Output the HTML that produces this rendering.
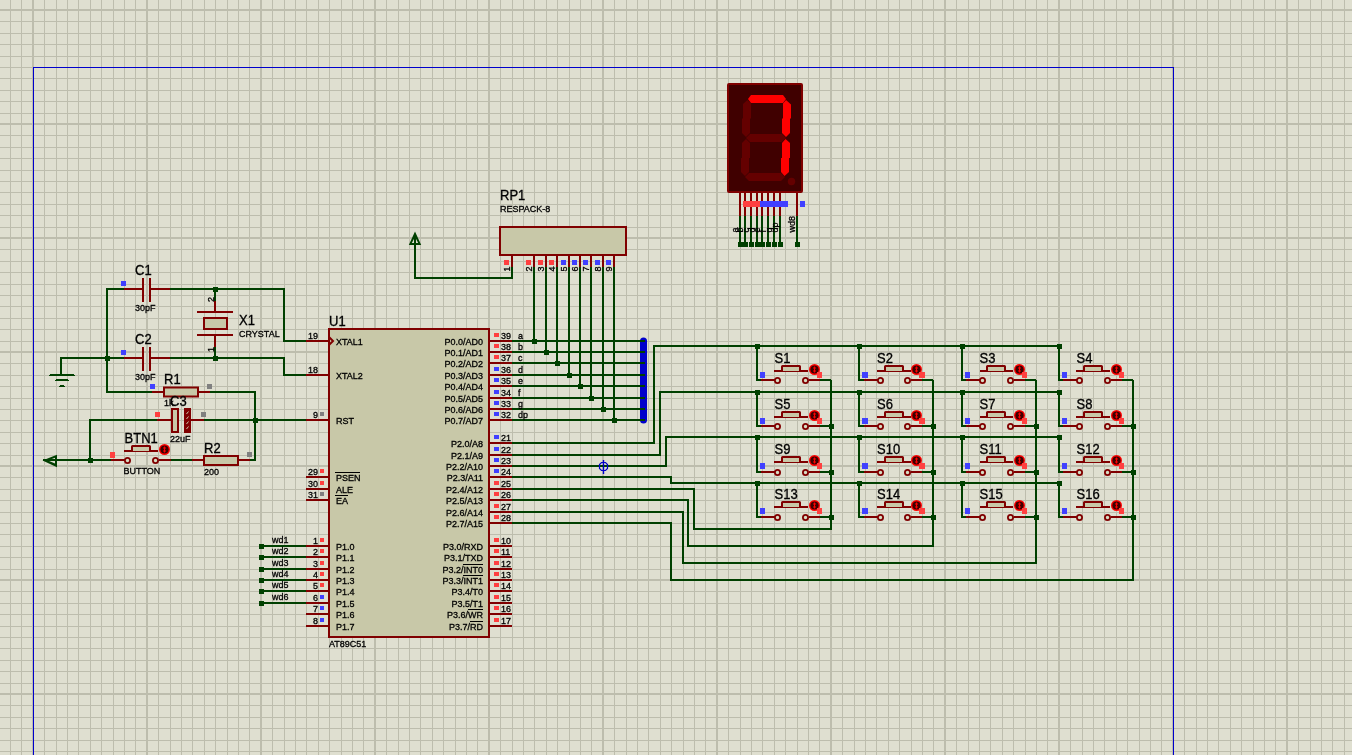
<!DOCTYPE html>
<html><head><meta charset="utf-8"><style>
html,body{margin:0;padding:0;overflow:hidden;background:#dfdfd0;}
svg{display:block;} .ov{position:absolute;left:0;top:0;will-change:transform;}
text{font-family:"Liberation Sans",sans-serif;}
</style></head><body>
<svg width="1352" height="755" viewBox="0 0 1352 755">
<rect width="1352" height="755" fill="#dfdfd0"/>
<g shape-rendering="crispEdges"><g fill="#bdbdad"><rect x="-1" y="0" width="1" height="755"/><rect x="10" y="0" width="1" height="755"/><rect x="21" y="0" width="1" height="755"/><rect x="32" y="0" width="2" height="755"/><rect x="44" y="0" width="1" height="755"/><rect x="56" y="0" width="1" height="755"/><rect x="67" y="0" width="1" height="755"/><rect x="78" y="0" width="1" height="755"/><rect x="90" y="0" width="1" height="755"/><rect x="101" y="0" width="1" height="755"/><rect x="113" y="0" width="1" height="755"/><rect x="124" y="0" width="1" height="755"/><rect x="135" y="0" width="1" height="755"/><rect x="146" y="0" width="2" height="755"/><rect x="158" y="0" width="1" height="755"/><rect x="170" y="0" width="1" height="755"/><rect x="181" y="0" width="1" height="755"/><rect x="192" y="0" width="1" height="755"/><rect x="204" y="0" width="1" height="755"/><rect x="215" y="0" width="1" height="755"/><rect x="227" y="0" width="1" height="755"/><rect x="238" y="0" width="1" height="755"/><rect x="249" y="0" width="1" height="755"/><rect x="260" y="0" width="2" height="755"/><rect x="272" y="0" width="1" height="755"/><rect x="284" y="0" width="1" height="755"/><rect x="295" y="0" width="1" height="755"/><rect x="306" y="0" width="1" height="755"/><rect x="318" y="0" width="1" height="755"/><rect x="329" y="0" width="1" height="755"/><rect x="341" y="0" width="1" height="755"/><rect x="352" y="0" width="1" height="755"/><rect x="363" y="0" width="1" height="755"/><rect x="374" y="0" width="2" height="755"/><rect x="386" y="0" width="1" height="755"/><rect x="398" y="0" width="1" height="755"/><rect x="409" y="0" width="1" height="755"/><rect x="420" y="0" width="1" height="755"/><rect x="432" y="0" width="1" height="755"/><rect x="443" y="0" width="1" height="755"/><rect x="455" y="0" width="1" height="755"/><rect x="466" y="0" width="1" height="755"/><rect x="477" y="0" width="1" height="755"/><rect x="488" y="0" width="2" height="755"/><rect x="500" y="0" width="1" height="755"/><rect x="512" y="0" width="1" height="755"/><rect x="523" y="0" width="1" height="755"/><rect x="534" y="0" width="1" height="755"/><rect x="546" y="0" width="1" height="755"/><rect x="557" y="0" width="1" height="755"/><rect x="569" y="0" width="1" height="755"/><rect x="580" y="0" width="1" height="755"/><rect x="591" y="0" width="1" height="755"/><rect x="602" y="0" width="2" height="755"/><rect x="614" y="0" width="1" height="755"/><rect x="626" y="0" width="1" height="755"/><rect x="637" y="0" width="1" height="755"/><rect x="648" y="0" width="1" height="755"/><rect x="660" y="0" width="1" height="755"/><rect x="671" y="0" width="1" height="755"/><rect x="683" y="0" width="1" height="755"/><rect x="694" y="0" width="1" height="755"/><rect x="705" y="0" width="1" height="755"/><rect x="716" y="0" width="2" height="755"/><rect x="728" y="0" width="1" height="755"/><rect x="740" y="0" width="1" height="755"/><rect x="751" y="0" width="1" height="755"/><rect x="762" y="0" width="1" height="755"/><rect x="774" y="0" width="1" height="755"/><rect x="785" y="0" width="1" height="755"/><rect x="797" y="0" width="1" height="755"/><rect x="808" y="0" width="1" height="755"/><rect x="819" y="0" width="1" height="755"/><rect x="830" y="0" width="2" height="755"/><rect x="842" y="0" width="1" height="755"/><rect x="854" y="0" width="1" height="755"/><rect x="865" y="0" width="1" height="755"/><rect x="876" y="0" width="1" height="755"/><rect x="888" y="0" width="1" height="755"/><rect x="899" y="0" width="1" height="755"/><rect x="911" y="0" width="1" height="755"/><rect x="922" y="0" width="1" height="755"/><rect x="933" y="0" width="1" height="755"/><rect x="944" y="0" width="2" height="755"/><rect x="956" y="0" width="1" height="755"/><rect x="968" y="0" width="1" height="755"/><rect x="979" y="0" width="1" height="755"/><rect x="990" y="0" width="1" height="755"/><rect x="1002" y="0" width="1" height="755"/><rect x="1013" y="0" width="1" height="755"/><rect x="1025" y="0" width="1" height="755"/><rect x="1036" y="0" width="1" height="755"/><rect x="1047" y="0" width="1" height="755"/><rect x="1058" y="0" width="2" height="755"/><rect x="1070" y="0" width="1" height="755"/><rect x="1082" y="0" width="1" height="755"/><rect x="1093" y="0" width="1" height="755"/><rect x="1104" y="0" width="1" height="755"/><rect x="1116" y="0" width="1" height="755"/><rect x="1127" y="0" width="1" height="755"/><rect x="1139" y="0" width="1" height="755"/><rect x="1150" y="0" width="1" height="755"/><rect x="1161" y="0" width="1" height="755"/><rect x="1172" y="0" width="2" height="755"/><rect x="1184" y="0" width="1" height="755"/><rect x="1196" y="0" width="1" height="755"/><rect x="1207" y="0" width="1" height="755"/><rect x="1218" y="0" width="1" height="755"/><rect x="1230" y="0" width="1" height="755"/><rect x="1241" y="0" width="1" height="755"/><rect x="1253" y="0" width="1" height="755"/><rect x="1264" y="0" width="1" height="755"/><rect x="1275" y="0" width="1" height="755"/><rect x="1286" y="0" width="2" height="755"/><rect x="1298" y="0" width="1" height="755"/><rect x="1310" y="0" width="1" height="755"/><rect x="1321" y="0" width="1" height="755"/><rect x="1332" y="0" width="1" height="755"/><rect x="1344" y="0" width="1" height="755"/><rect x="0" y="-1" width="1352" height="1"/><rect x="0" y="9" width="1352" height="2"/><rect x="0" y="21" width="1352" height="1"/><rect x="0" y="33" width="1352" height="1"/><rect x="0" y="44" width="1352" height="1"/><rect x="0" y="56" width="1352" height="1"/><rect x="0" y="67" width="1352" height="1"/><rect x="0" y="78" width="1352" height="1"/><rect x="0" y="90" width="1352" height="1"/><rect x="0" y="101" width="1352" height="1"/><rect x="0" y="113" width="1352" height="1"/><rect x="0" y="123" width="1352" height="2"/><rect x="0" y="135" width="1352" height="1"/><rect x="0" y="147" width="1352" height="1"/><rect x="0" y="158" width="1352" height="1"/><rect x="0" y="170" width="1352" height="1"/><rect x="0" y="181" width="1352" height="1"/><rect x="0" y="192" width="1352" height="1"/><rect x="0" y="204" width="1352" height="1"/><rect x="0" y="215" width="1352" height="1"/><rect x="0" y="227" width="1352" height="1"/><rect x="0" y="237" width="1352" height="2"/><rect x="0" y="249" width="1352" height="1"/><rect x="0" y="261" width="1352" height="1"/><rect x="0" y="272" width="1352" height="1"/><rect x="0" y="284" width="1352" height="1"/><rect x="0" y="295" width="1352" height="1"/><rect x="0" y="306" width="1352" height="1"/><rect x="0" y="318" width="1352" height="1"/><rect x="0" y="329" width="1352" height="1"/><rect x="0" y="341" width="1352" height="1"/><rect x="0" y="351" width="1352" height="2"/><rect x="0" y="363" width="1352" height="1"/><rect x="0" y="375" width="1352" height="1"/><rect x="0" y="386" width="1352" height="1"/><rect x="0" y="398" width="1352" height="1"/><rect x="0" y="409" width="1352" height="1"/><rect x="0" y="420" width="1352" height="1"/><rect x="0" y="432" width="1352" height="1"/><rect x="0" y="443" width="1352" height="1"/><rect x="0" y="455" width="1352" height="1"/><rect x="0" y="465" width="1352" height="2"/><rect x="0" y="477" width="1352" height="1"/><rect x="0" y="489" width="1352" height="1"/><rect x="0" y="500" width="1352" height="1"/><rect x="0" y="512" width="1352" height="1"/><rect x="0" y="523" width="1352" height="1"/><rect x="0" y="534" width="1352" height="1"/><rect x="0" y="546" width="1352" height="1"/><rect x="0" y="557" width="1352" height="1"/><rect x="0" y="569" width="1352" height="1"/><rect x="0" y="579" width="1352" height="2"/><rect x="0" y="591" width="1352" height="1"/><rect x="0" y="603" width="1352" height="1"/><rect x="0" y="614" width="1352" height="1"/><rect x="0" y="626" width="1352" height="1"/><rect x="0" y="637" width="1352" height="1"/><rect x="0" y="648" width="1352" height="1"/><rect x="0" y="660" width="1352" height="1"/><rect x="0" y="671" width="1352" height="1"/><rect x="0" y="683" width="1352" height="1"/><rect x="0" y="693" width="1352" height="2"/><rect x="0" y="705" width="1352" height="1"/><rect x="0" y="717" width="1352" height="1"/><rect x="0" y="728" width="1352" height="1"/><rect x="0" y="740" width="1352" height="1"/><rect x="0" y="751" width="1352" height="1"/></g><path d="M33.5,760 V67.5 H1173.5 V760" fill="none" stroke="#0000cc" stroke-width="1"/></g>
<path d="M643.5,341 V420" stroke="#0000cc" stroke-width="7" stroke-linecap="round"/><g shape-rendering="crispEdges"><g fill="none" stroke="#004000" stroke-width="2"><path d="M124,289 H107 V392 H152"/><path d="M170,289 H284 V341 H306"/><path d="M61,375 V358 H124"/><path d="M170,358 H284 V375 H306"/><path d="M215,289 V301"/><path d="M215,347 V358"/><path d="M210,392 H255 V460 H250"/><path d="M306,420 H204"/><path d="M157,420 H90 V460"/><path d="M56,460 H112"/><path d="M170,460 H192"/><path d="M43,460 H56"/><path d="M757,346 V380 H761"/><path d="M820,380 H831"/><path d="M859,346 V380 H864"/><path d="M922,380 H933"/><path d="M962,346 V380 H966"/><path d="M1025,380 H1036"/><path d="M1059,346 V380 H1063"/><path d="M1122,380 H1133"/><path d="M757,392 V426 H761"/><path d="M820,426 H831"/><path d="M859,392 V426 H864"/><path d="M922,426 H933"/><path d="M962,392 V426 H966"/><path d="M1025,426 H1036"/><path d="M1059,392 V426 H1063"/><path d="M1122,426 H1133"/><path d="M757,437 V472 H761"/><path d="M820,472 H831"/><path d="M859,437 V472 H864"/><path d="M922,472 H933"/><path d="M962,437 V472 H966"/><path d="M1025,472 H1036"/><path d="M1059,437 V472 H1063"/><path d="M1122,472 H1133"/><path d="M757,483 V517 H761"/><path d="M820,517 H831"/><path d="M859,483 V517 H864"/><path d="M922,517 H933"/><path d="M962,483 V517 H966"/><path d="M1025,517 H1036"/><path d="M1059,483 V517 H1063"/><path d="M1122,517 H1133"/><path d="M512,443 H654 V346 H1059"/><path d="M512,455 H660 V392 H1059"/><path d="M512,466 H666 V437 H1059"/><path d="M512,477 H671 V483 H1059"/><path d="M831,380 V529 H694 V489 H512"/><path d="M933,380 V546 H688 V500 H512"/><path d="M1036,380 V563 H683 V512 H512"/><path d="M1133,380 V580 H671 V523 H512"/><path d="M261,546 H306"/><path d="M261,557 H306"/><path d="M261,569 H306"/><path d="M261,580 H306"/><path d="M261,591 H306"/><path d="M261,603 H306"/><path d="M512,267 V278 H415 V244"/><path d="M415,234 V244"/><path d="M534,267 V341"/><path d="M512,341 H645"/><path d="M546,267 V352"/><path d="M512,352 H645"/><path d="M557,267 V363"/><path d="M512,363 H645"/><path d="M569,267 V375"/><path d="M512,375 H645"/><path d="M580,267 V386"/><path d="M512,386 H645"/><path d="M591,267 V398"/><path d="M512,398 H645"/><path d="M603,267 V409"/><path d="M512,409 H645"/><path d="M614,267 V420"/><path d="M512,420 H645"/><path d="M740,216 V244"/><path d="M745,216 V244"/><path d="M751,216 V244"/><path d="M757,216 V244"/><path d="M762,216 V244"/><path d="M768,216 V244"/><path d="M774,216 V244"/><path d="M780,216 V244"/><path d="M797,216 V244"/></g><g fill="none" stroke="#800000" stroke-width="2"><path d="M215,301 V312"/><path d="M215,335 V347"/><path d="M124,289 H143.0 M151.0,289 H170"/><path d="M124,358 H143.0 M151.0,358 H170"/><path d="M152,392 H164 M198,392 H210"/><path d="M157,420 H172 M191,420 H204"/><path d="M192,460 H204 M238,460 H250"/><path d="M111,460 H124.5 M158.5,460 H171"/><path d="M761,380 H774.5 M808.5,380 H820"/><path d="M864,380 H877.5 M910.5,380 H922"/><path d="M966,380 H979.5 M1013.5,380 H1025"/><path d="M1063,380 H1076.5 M1110.5,380 H1122"/><path d="M761,426 H774.5 M808.5,426 H820"/><path d="M864,426 H877.5 M910.5,426 H922"/><path d="M966,426 H979.5 M1013.5,426 H1025"/><path d="M1063,426 H1076.5 M1110.5,426 H1122"/><path d="M761,472 H774.5 M808.5,472 H820"/><path d="M864,472 H877.5 M910.5,472 H922"/><path d="M966,472 H979.5 M1013.5,472 H1025"/><path d="M1063,472 H1076.5 M1110.5,472 H1122"/><path d="M761,517 H774.5 M808.5,517 H820"/><path d="M864,517 H877.5 M910.5,517 H922"/><path d="M966,517 H979.5 M1013.5,517 H1025"/><path d="M1063,517 H1076.5 M1110.5,517 H1122"/><path d="M306,341 H329"/><path d="M306,375 H329"/><path d="M306,420 H329"/><path d="M306,477 H329"/><path d="M306,489 H329"/><path d="M306,500 H329"/><path d="M306,546 H329"/><path d="M306,557 H329"/><path d="M306,569 H329"/><path d="M306,580 H329"/><path d="M306,591 H329"/><path d="M306,603 H329"/><path d="M306,614 H329"/><path d="M306,626 H329"/><path d="M489,341 H512"/><path d="M489,352 H512"/><path d="M489,363 H512"/><path d="M489,375 H512"/><path d="M489,386 H512"/><path d="M489,398 H512"/><path d="M489,409 H512"/><path d="M489,420 H512"/><path d="M489,443 H512"/><path d="M489,455 H512"/><path d="M489,466 H512"/><path d="M489,477 H512"/><path d="M489,489 H512"/><path d="M489,500 H512"/><path d="M489,512 H512"/><path d="M489,523 H512"/><path d="M489,546 H512"/><path d="M489,557 H512"/><path d="M489,569 H512"/><path d="M489,580 H512"/><path d="M489,591 H512"/><path d="M489,603 H512"/><path d="M489,614 H512"/><path d="M489,626 H512"/><path d="M512,255 V267"/><path d="M534,255 V267"/><path d="M546,255 V267"/><path d="M557,255 V267"/><path d="M569,255 V267"/><path d="M580,255 V267"/><path d="M591,255 V267"/><path d="M603,255 V267"/><path d="M614,255 V267"/><path d="M740,192 V216"/><path d="M745,192 V216"/><path d="M751,192 V216"/><path d="M757,192 V216"/><path d="M762,192 V216"/><path d="M768,192 V216"/><path d="M774,192 V216"/><path d="M780,192 V216"/><path d="M797,192 V216"/></g></g>
<rect x="142.0" y="278" width="2" height="24" fill="#800000"/><rect x="149.0" y="278" width="2" height="24" fill="#800000"/><rect x="142.0" y="347" width="2" height="24" fill="#800000"/><rect x="149.0" y="347" width="2" height="24" fill="#800000"/><path d="M197,312 H233 M197,335 H233" stroke="#800000" stroke-width="2" fill="none"/><rect x="204" y="318" width="23" height="11" fill="#c8c8a8" stroke="#800000" stroke-width="2"/><g fill="#004000" shape-rendering="crispEdges"><rect x="50" y="374" width="24" height="1"/><rect x="49" y="375" width="26" height="1"/><rect x="56" y="379" width="12" height="1"/><rect x="55" y="380" width="14" height="1"/><rect x="60" y="385" width="4" height="1"/><rect x="59" y="386" width="6" height="1"/></g><rect x="164" y="387.5" width="34" height="9" fill="#c8c8a8" stroke="#800000" stroke-width="2"/><rect x="172" y="409" width="6" height="23" fill="#c8c8a8" stroke="#800000" stroke-width="2"/><rect x="185" y="409" width="5" height="23" fill="#800000" stroke="#800000" stroke-width="2"/><path d="M186.5,414 l2,-2.5 M186.5,419 l2,-2.5 M186.5,424 l2,-2.5 M186.5,429 l2,-2.5" stroke="#c8c8a8" stroke-width="1"/><rect x="204" y="456" width="34" height="9" fill="#c8c8a8" stroke="#800000" stroke-width="2"/><path d="M42.5,460.5 L57,454.8 V467.2 Z M48,460.5 L55,457.8 V463.6 Z" fill="#004000" fill-rule="evenodd"/><path d="M415,231.5 L408.8,245 H421.2 Z M415,237 L411.8,243 H418.2 Z" fill="#004000" fill-rule="evenodd"/><circle cx="127.5" cy="460.5" r="2.6" fill="#d8dcc4" stroke="#800000" stroke-width="1.8"/><circle cx="155.5" cy="460.5" r="2.6" fill="#d8dcc4" stroke="#800000" stroke-width="1.8"/><path d="M124,451 H158" stroke="#800000" stroke-width="2"/><path d="M132,451 V446.5 Q132,446 132.5,446 H149.5 Q150,446 150,446.5 V451" fill="#c8c8a8" stroke="#800000" stroke-width="2"/><circle cx="164.5" cy="449.5" r="5.5" fill="#ff0000"/><circle cx="164.5" cy="449.5" r="4.1" fill="#400000"/><path d="M164.5,446.5 V452.5 M163.0,448.0 H166.0 M163.0,451.0 H166.0" stroke="#ff0000" stroke-width="1"/><circle cx="777.5" cy="380.5" r="2.6" fill="#d8dcc4" stroke="#800000" stroke-width="1.8"/><circle cx="805.5" cy="380.5" r="2.6" fill="#d8dcc4" stroke="#800000" stroke-width="1.8"/><path d="M774,371 H808" stroke="#800000" stroke-width="2"/><path d="M782,371 V366.5 Q782,366 782.5,366 H799.5 Q800,366 800,366.5 V371" fill="#c8c8a8" stroke="#800000" stroke-width="2"/><circle cx="814.5" cy="369.5" r="5.5" fill="#ff0000"/><circle cx="814.5" cy="369.5" r="4.1" fill="#400000"/><path d="M814.5,366.5 V372.5 M813.0,368.0 H816.0 M813.0,371.0 H816.0" stroke="#ff0000" stroke-width="1"/><circle cx="880.5" cy="380.5" r="2.6" fill="#d8dcc4" stroke="#800000" stroke-width="1.8"/><circle cx="907.5" cy="380.5" r="2.6" fill="#d8dcc4" stroke="#800000" stroke-width="1.8"/><path d="M877,371 H911" stroke="#800000" stroke-width="2"/><path d="M885,371 V366.5 Q885,366 885.5,366 H902.5 Q903,366 903,366.5 V371" fill="#c8c8a8" stroke="#800000" stroke-width="2"/><circle cx="916.5" cy="369.5" r="5.5" fill="#ff0000"/><circle cx="916.5" cy="369.5" r="4.1" fill="#400000"/><path d="M916.5,366.5 V372.5 M915.0,368.0 H918.0 M915.0,371.0 H918.0" stroke="#ff0000" stroke-width="1"/><circle cx="982.5" cy="380.5" r="2.6" fill="#d8dcc4" stroke="#800000" stroke-width="1.8"/><circle cx="1010.5" cy="380.5" r="2.6" fill="#d8dcc4" stroke="#800000" stroke-width="1.8"/><path d="M980,371 H1013" stroke="#800000" stroke-width="2"/><path d="M987,371 V366.5 Q987,366 987.5,366 H1004.5 Q1005,366 1005,366.5 V371" fill="#c8c8a8" stroke="#800000" stroke-width="2"/><circle cx="1019.5" cy="369.5" r="5.5" fill="#ff0000"/><circle cx="1019.5" cy="369.5" r="4.1" fill="#400000"/><path d="M1019.5,366.5 V372.5 M1018.0,368.0 H1021.0 M1018.0,371.0 H1021.0" stroke="#ff0000" stroke-width="1"/><circle cx="1079.5" cy="380.5" r="2.6" fill="#d8dcc4" stroke="#800000" stroke-width="1.8"/><circle cx="1107.5" cy="380.5" r="2.6" fill="#d8dcc4" stroke="#800000" stroke-width="1.8"/><path d="M1076,371 H1110" stroke="#800000" stroke-width="2"/><path d="M1084,371 V366.5 Q1084,366 1084.5,366 H1101.5 Q1102,366 1102,366.5 V371" fill="#c8c8a8" stroke="#800000" stroke-width="2"/><circle cx="1116.5" cy="369.5" r="5.5" fill="#ff0000"/><circle cx="1116.5" cy="369.5" r="4.1" fill="#400000"/><path d="M1116.5,366.5 V372.5 M1115.0,368.0 H1118.0 M1115.0,371.0 H1118.0" stroke="#ff0000" stroke-width="1"/><circle cx="777.5" cy="426.5" r="2.6" fill="#d8dcc4" stroke="#800000" stroke-width="1.8"/><circle cx="805.5" cy="426.5" r="2.6" fill="#d8dcc4" stroke="#800000" stroke-width="1.8"/><path d="M774,417 H808" stroke="#800000" stroke-width="2"/><path d="M782,417 V412.5 Q782,412 782.5,412 H799.5 Q800,412 800,412.5 V417" fill="#c8c8a8" stroke="#800000" stroke-width="2"/><circle cx="814.5" cy="415.5" r="5.5" fill="#ff0000"/><circle cx="814.5" cy="415.5" r="4.1" fill="#400000"/><path d="M814.5,412.5 V418.5 M813.0,414.0 H816.0 M813.0,417.0 H816.0" stroke="#ff0000" stroke-width="1"/><circle cx="880.5" cy="426.5" r="2.6" fill="#d8dcc4" stroke="#800000" stroke-width="1.8"/><circle cx="907.5" cy="426.5" r="2.6" fill="#d8dcc4" stroke="#800000" stroke-width="1.8"/><path d="M877,417 H911" stroke="#800000" stroke-width="2"/><path d="M885,417 V412.5 Q885,412 885.5,412 H902.5 Q903,412 903,412.5 V417" fill="#c8c8a8" stroke="#800000" stroke-width="2"/><circle cx="916.5" cy="415.5" r="5.5" fill="#ff0000"/><circle cx="916.5" cy="415.5" r="4.1" fill="#400000"/><path d="M916.5,412.5 V418.5 M915.0,414.0 H918.0 M915.0,417.0 H918.0" stroke="#ff0000" stroke-width="1"/><circle cx="982.5" cy="426.5" r="2.6" fill="#d8dcc4" stroke="#800000" stroke-width="1.8"/><circle cx="1010.5" cy="426.5" r="2.6" fill="#d8dcc4" stroke="#800000" stroke-width="1.8"/><path d="M980,417 H1013" stroke="#800000" stroke-width="2"/><path d="M987,417 V412.5 Q987,412 987.5,412 H1004.5 Q1005,412 1005,412.5 V417" fill="#c8c8a8" stroke="#800000" stroke-width="2"/><circle cx="1019.5" cy="415.5" r="5.5" fill="#ff0000"/><circle cx="1019.5" cy="415.5" r="4.1" fill="#400000"/><path d="M1019.5,412.5 V418.5 M1018.0,414.0 H1021.0 M1018.0,417.0 H1021.0" stroke="#ff0000" stroke-width="1"/><circle cx="1079.5" cy="426.5" r="2.6" fill="#d8dcc4" stroke="#800000" stroke-width="1.8"/><circle cx="1107.5" cy="426.5" r="2.6" fill="#d8dcc4" stroke="#800000" stroke-width="1.8"/><path d="M1076,417 H1110" stroke="#800000" stroke-width="2"/><path d="M1084,417 V412.5 Q1084,412 1084.5,412 H1101.5 Q1102,412 1102,412.5 V417" fill="#c8c8a8" stroke="#800000" stroke-width="2"/><circle cx="1116.5" cy="415.5" r="5.5" fill="#ff0000"/><circle cx="1116.5" cy="415.5" r="4.1" fill="#400000"/><path d="M1116.5,412.5 V418.5 M1115.0,414.0 H1118.0 M1115.0,417.0 H1118.0" stroke="#ff0000" stroke-width="1"/><circle cx="777.5" cy="472.5" r="2.6" fill="#d8dcc4" stroke="#800000" stroke-width="1.8"/><circle cx="805.5" cy="472.5" r="2.6" fill="#d8dcc4" stroke="#800000" stroke-width="1.8"/><path d="M774,462 H808" stroke="#800000" stroke-width="2"/><path d="M782,462 V457.5 Q782,457 782.5,457 H799.5 Q800,457 800,457.5 V462" fill="#c8c8a8" stroke="#800000" stroke-width="2"/><circle cx="814.5" cy="460.5" r="5.5" fill="#ff0000"/><circle cx="814.5" cy="460.5" r="4.1" fill="#400000"/><path d="M814.5,457.5 V463.5 M813.0,459.0 H816.0 M813.0,462.0 H816.0" stroke="#ff0000" stroke-width="1"/><circle cx="880.5" cy="472.5" r="2.6" fill="#d8dcc4" stroke="#800000" stroke-width="1.8"/><circle cx="907.5" cy="472.5" r="2.6" fill="#d8dcc4" stroke="#800000" stroke-width="1.8"/><path d="M877,462 H911" stroke="#800000" stroke-width="2"/><path d="M885,462 V457.5 Q885,457 885.5,457 H902.5 Q903,457 903,457.5 V462" fill="#c8c8a8" stroke="#800000" stroke-width="2"/><circle cx="916.5" cy="460.5" r="5.5" fill="#ff0000"/><circle cx="916.5" cy="460.5" r="4.1" fill="#400000"/><path d="M916.5,457.5 V463.5 M915.0,459.0 H918.0 M915.0,462.0 H918.0" stroke="#ff0000" stroke-width="1"/><circle cx="982.5" cy="472.5" r="2.6" fill="#d8dcc4" stroke="#800000" stroke-width="1.8"/><circle cx="1010.5" cy="472.5" r="2.6" fill="#d8dcc4" stroke="#800000" stroke-width="1.8"/><path d="M980,462 H1013" stroke="#800000" stroke-width="2"/><path d="M987,462 V457.5 Q987,457 987.5,457 H1004.5 Q1005,457 1005,457.5 V462" fill="#c8c8a8" stroke="#800000" stroke-width="2"/><circle cx="1019.5" cy="460.5" r="5.5" fill="#ff0000"/><circle cx="1019.5" cy="460.5" r="4.1" fill="#400000"/><path d="M1019.5,457.5 V463.5 M1018.0,459.0 H1021.0 M1018.0,462.0 H1021.0" stroke="#ff0000" stroke-width="1"/><circle cx="1079.5" cy="472.5" r="2.6" fill="#d8dcc4" stroke="#800000" stroke-width="1.8"/><circle cx="1107.5" cy="472.5" r="2.6" fill="#d8dcc4" stroke="#800000" stroke-width="1.8"/><path d="M1076,462 H1110" stroke="#800000" stroke-width="2"/><path d="M1084,462 V457.5 Q1084,457 1084.5,457 H1101.5 Q1102,457 1102,457.5 V462" fill="#c8c8a8" stroke="#800000" stroke-width="2"/><circle cx="1116.5" cy="460.5" r="5.5" fill="#ff0000"/><circle cx="1116.5" cy="460.5" r="4.1" fill="#400000"/><path d="M1116.5,457.5 V463.5 M1115.0,459.0 H1118.0 M1115.0,462.0 H1118.0" stroke="#ff0000" stroke-width="1"/><circle cx="777.5" cy="517.5" r="2.6" fill="#d8dcc4" stroke="#800000" stroke-width="1.8"/><circle cx="805.5" cy="517.5" r="2.6" fill="#d8dcc4" stroke="#800000" stroke-width="1.8"/><path d="M774,507 H808" stroke="#800000" stroke-width="2"/><path d="M782,507 V502.5 Q782,502 782.5,502 H799.5 Q800,502 800,502.5 V507" fill="#c8c8a8" stroke="#800000" stroke-width="2"/><circle cx="814.5" cy="505.5" r="5.5" fill="#ff0000"/><circle cx="814.5" cy="505.5" r="4.1" fill="#400000"/><path d="M814.5,502.5 V508.5 M813.0,504.0 H816.0 M813.0,507.0 H816.0" stroke="#ff0000" stroke-width="1"/><circle cx="880.5" cy="517.5" r="2.6" fill="#d8dcc4" stroke="#800000" stroke-width="1.8"/><circle cx="907.5" cy="517.5" r="2.6" fill="#d8dcc4" stroke="#800000" stroke-width="1.8"/><path d="M877,507 H911" stroke="#800000" stroke-width="2"/><path d="M885,507 V502.5 Q885,502 885.5,502 H902.5 Q903,502 903,502.5 V507" fill="#c8c8a8" stroke="#800000" stroke-width="2"/><circle cx="916.5" cy="505.5" r="5.5" fill="#ff0000"/><circle cx="916.5" cy="505.5" r="4.1" fill="#400000"/><path d="M916.5,502.5 V508.5 M915.0,504.0 H918.0 M915.0,507.0 H918.0" stroke="#ff0000" stroke-width="1"/><circle cx="982.5" cy="517.5" r="2.6" fill="#d8dcc4" stroke="#800000" stroke-width="1.8"/><circle cx="1010.5" cy="517.5" r="2.6" fill="#d8dcc4" stroke="#800000" stroke-width="1.8"/><path d="M980,507 H1013" stroke="#800000" stroke-width="2"/><path d="M987,507 V502.5 Q987,502 987.5,502 H1004.5 Q1005,502 1005,502.5 V507" fill="#c8c8a8" stroke="#800000" stroke-width="2"/><circle cx="1019.5" cy="505.5" r="5.5" fill="#ff0000"/><circle cx="1019.5" cy="505.5" r="4.1" fill="#400000"/><path d="M1019.5,502.5 V508.5 M1018.0,504.0 H1021.0 M1018.0,507.0 H1021.0" stroke="#ff0000" stroke-width="1"/><circle cx="1079.5" cy="517.5" r="2.6" fill="#d8dcc4" stroke="#800000" stroke-width="1.8"/><circle cx="1107.5" cy="517.5" r="2.6" fill="#d8dcc4" stroke="#800000" stroke-width="1.8"/><path d="M1076,507 H1110" stroke="#800000" stroke-width="2"/><path d="M1084,507 V502.5 Q1084,502 1084.5,502 H1101.5 Q1102,502 1102,502.5 V507" fill="#c8c8a8" stroke="#800000" stroke-width="2"/><circle cx="1116.5" cy="505.5" r="5.5" fill="#ff0000"/><circle cx="1116.5" cy="505.5" r="4.1" fill="#400000"/><path d="M1116.5,502.5 V508.5 M1115.0,504.0 H1118.0 M1115.0,507.0 H1118.0" stroke="#ff0000" stroke-width="1"/><rect x="329" y="329" width="160" height="308" fill="#c8c8a8" stroke="#800000" stroke-width="2"/><path d="M329,337 L333,341 L329,345" fill="none" stroke="#800000" stroke-width="2"/><rect x="500" y="227" width="126" height="28" fill="#c8c8a8" stroke="#800000" stroke-width="2"/><rect x="728" y="84" width="74" height="108" rx="1" fill="#400000" stroke="#800000" stroke-width="2"/><polygon points="748,99 751,95 783,95 786,99 783,103 751,103" fill="#ff0000"/><polygon points="786,100 791,104.5 791,118.5 790,118.5 790,133 786,137 782,133 782,118.5 783,118.5 783,103.5" fill="#ff0000"/><polygon points="785.5,139 790,143 790,158 789,158 789,172 784.5,176 781,172 781,158 782,158 782,143" fill="#ff0000"/><polygon points="745,177 749,173 781,173 785,177 781,181 749,181" fill="#640000"/><polygon points="746,139 750,143 750,158 749,158 749,172 745,176 741,172 741,158 742,158 742,143" fill="#640000"/><polygon points="747.5,100 751,103.5 751,118.5 750,118.5 750,133 746,137 742,133 742,118.5 743,118.5 743,104" fill="#640000"/><polygon points="746,138 750,134 782,134 786,138 782,142 750,142" fill="#640000"/><circle cx="791.5" cy="181.5" r="3.7" fill="#640000"/><g fill="none" stroke="#0000cc" stroke-width="1.2"><path d="M603.5,460 V474" stroke-width="1.4"/><path d="M601.5,462.5 H605.5 L607.5,464.5 V468.5 L605.5,470.5 H601.5 L599.5,468.5 V464.5 Z"/></g><g fill="#004000"><rect x="213" y="287" width="5" height="5"/><rect x="213" y="356" width="5" height="5"/><rect x="105" y="356" width="5" height="5"/><rect x="253" y="418" width="5" height="5"/><rect x="88" y="458" width="5" height="5"/><rect x="755" y="344" width="5" height="5"/><rect x="857" y="344" width="5" height="5"/><rect x="960" y="344" width="5" height="5"/><rect x="1057" y="344" width="5" height="5"/><rect x="755" y="390" width="5" height="5"/><rect x="829" y="424" width="5" height="5"/><rect x="857" y="390" width="5" height="5"/><rect x="931" y="424" width="5" height="5"/><rect x="960" y="390" width="5" height="5"/><rect x="1034" y="424" width="5" height="5"/><rect x="1057" y="390" width="5" height="5"/><rect x="1131" y="424" width="5" height="5"/><rect x="755" y="435" width="5" height="5"/><rect x="829" y="470" width="5" height="5"/><rect x="857" y="435" width="5" height="5"/><rect x="931" y="470" width="5" height="5"/><rect x="960" y="435" width="5" height="5"/><rect x="1034" y="470" width="5" height="5"/><rect x="1057" y="435" width="5" height="5"/><rect x="1131" y="470" width="5" height="5"/><rect x="755" y="481" width="5" height="5"/><rect x="829" y="515" width="5" height="5"/><rect x="857" y="481" width="5" height="5"/><rect x="931" y="515" width="5" height="5"/><rect x="960" y="481" width="5" height="5"/><rect x="1034" y="515" width="5" height="5"/><rect x="1057" y="481" width="5" height="5"/><rect x="1131" y="515" width="5" height="5"/><rect x="259" y="544" width="5" height="5"/><rect x="259" y="555" width="5" height="5"/><rect x="259" y="567" width="5" height="5"/><rect x="259" y="578" width="5" height="5"/><rect x="259" y="589" width="5" height="5"/><rect x="259" y="601" width="5" height="5"/><rect x="532" y="339" width="5" height="5"/><rect x="544" y="350" width="5" height="5"/><rect x="555" y="361" width="5" height="5"/><rect x="567" y="373" width="5" height="5"/><rect x="578" y="384" width="5" height="5"/><rect x="589" y="396" width="5" height="5"/><rect x="601" y="407" width="5" height="5"/><rect x="612" y="418" width="5" height="5"/><rect x="738" y="242" width="5" height="5"/><rect x="743" y="242" width="5" height="5"/><rect x="749" y="242" width="5" height="5"/><rect x="755" y="242" width="5" height="5"/><rect x="760" y="242" width="5" height="5"/><rect x="766" y="242" width="5" height="5"/><rect x="772" y="242" width="5" height="5"/><rect x="778" y="242" width="5" height="5"/><rect x="795" y="242" width="5" height="5"/></g><rect x="121" y="281" width="5" height="5" fill="#4040ff"/><rect x="121" y="350" width="5" height="5" fill="#4040ff"/><rect x="150" y="384" width="5" height="5" fill="#4040ff"/><rect x="207" y="384" width="5" height="5" fill="#808080"/><rect x="155" y="412" width="5" height="5" fill="#ff4040"/><rect x="201" y="412" width="5" height="5" fill="#808080"/><rect x="247" y="452" width="5" height="5" fill="#808080"/><rect x="110" y="452" width="5" height="6" fill="#ff4040"/><rect x="760" y="372" width="5" height="6" fill="#4040ff"/><rect x="817" y="372" width="5" height="6" fill="#ff4040"/><rect x="862" y="372" width="6" height="6" fill="#4040ff"/><rect x="919" y="372" width="6" height="6" fill="#ff4040"/><rect x="965" y="372" width="5" height="6" fill="#4040ff"/><rect x="1022" y="372" width="5" height="6" fill="#ff4040"/><rect x="1062" y="372" width="5" height="6" fill="#4040ff"/><rect x="1119" y="372" width="5" height="6" fill="#ff4040"/><rect x="760" y="418" width="5" height="6" fill="#4040ff"/><rect x="817" y="418" width="5" height="6" fill="#ff4040"/><rect x="862" y="418" width="6" height="6" fill="#4040ff"/><rect x="919" y="418" width="6" height="6" fill="#ff4040"/><rect x="965" y="418" width="5" height="6" fill="#4040ff"/><rect x="1022" y="418" width="5" height="6" fill="#ff4040"/><rect x="1062" y="418" width="5" height="6" fill="#4040ff"/><rect x="1119" y="418" width="5" height="6" fill="#ff4040"/><rect x="760" y="463" width="5" height="6" fill="#4040ff"/><rect x="817" y="463" width="5" height="6" fill="#ff4040"/><rect x="862" y="463" width="6" height="6" fill="#4040ff"/><rect x="919" y="463" width="6" height="6" fill="#ff4040"/><rect x="965" y="463" width="5" height="6" fill="#4040ff"/><rect x="1022" y="463" width="5" height="6" fill="#ff4040"/><rect x="1062" y="463" width="5" height="6" fill="#4040ff"/><rect x="1119" y="463" width="5" height="6" fill="#ff4040"/><rect x="760" y="508" width="5" height="6" fill="#4040ff"/><rect x="817" y="508" width="5" height="6" fill="#ff4040"/><rect x="862" y="508" width="6" height="6" fill="#4040ff"/><rect x="919" y="508" width="6" height="6" fill="#ff4040"/><rect x="965" y="508" width="5" height="6" fill="#4040ff"/><rect x="1022" y="508" width="5" height="6" fill="#ff4040"/><rect x="1062" y="508" width="5" height="6" fill="#4040ff"/><rect x="1119" y="508" width="5" height="6" fill="#ff4040"/><rect x="320" y="412" width="4" height="4" fill="#808080"/><rect x="320" y="469" width="4" height="4" fill="#ff4040"/><rect x="320" y="481" width="4" height="4" fill="#ff4040"/><rect x="320" y="492" width="4" height="4" fill="#808080"/><rect x="320" y="538" width="4" height="4" fill="#ff4040"/><rect x="320" y="549" width="4" height="4" fill="#ff4040"/><rect x="320" y="561" width="4" height="4" fill="#ff4040"/><rect x="320" y="572" width="4" height="4" fill="#ff4040"/><rect x="320" y="583" width="4" height="4" fill="#ff4040"/><rect x="320" y="595" width="4" height="4" fill="#4040ff"/><rect x="320" y="606" width="4" height="4" fill="#4040ff"/><rect x="320" y="618" width="4" height="4" fill="#4040ff"/><rect x="494" y="333" width="5" height="4" fill="#ff4040"/><rect x="494" y="344" width="5" height="4" fill="#ff4040"/><rect x="494" y="355" width="5" height="4" fill="#ff4040"/><rect x="494" y="367" width="5" height="4" fill="#4040ff"/><rect x="494" y="378" width="5" height="4" fill="#4040ff"/><rect x="494" y="390" width="5" height="4" fill="#4040ff"/><rect x="494" y="401" width="5" height="4" fill="#4040ff"/><rect x="494" y="412" width="5" height="4" fill="#4040ff"/><rect x="494" y="435" width="5" height="4" fill="#4040ff"/><rect x="494" y="447" width="5" height="4" fill="#4040ff"/><rect x="494" y="458" width="5" height="4" fill="#4040ff"/><rect x="494" y="469" width="5" height="4" fill="#4040ff"/><rect x="494" y="481" width="5" height="4" fill="#ff4040"/><rect x="494" y="492" width="5" height="4" fill="#ff4040"/><rect x="494" y="504" width="5" height="4" fill="#ff4040"/><rect x="494" y="515" width="5" height="4" fill="#ff4040"/><rect x="494" y="538" width="5" height="4" fill="#ff4040"/><rect x="494" y="549" width="5" height="4" fill="#ff4040"/><rect x="494" y="561" width="5" height="4" fill="#ff4040"/><rect x="494" y="572" width="5" height="4" fill="#ff4040"/><rect x="494" y="583" width="5" height="4" fill="#ff4040"/><rect x="494" y="595" width="5" height="4" fill="#ff4040"/><rect x="494" y="606" width="5" height="4" fill="#ff4040"/><rect x="494" y="618" width="5" height="4" fill="#ff4040"/><rect x="335" y="472" width="25" height="1" fill="#000"/><rect x="335" y="495" width="13" height="1" fill="#000"/><rect x="463" y="564" width="20" height="1" fill="#000"/><rect x="463" y="575" width="20" height="1" fill="#000"/><rect x="468" y="609" width="15" height="1" fill="#000"/><rect x="470" y="621" width="13" height="1" fill="#000"/><rect x="504" y="260" width="5" height="5" fill="#ff4040"/><rect x="526" y="260" width="5" height="5" fill="#ff4040"/><rect x="538" y="260" width="5" height="5" fill="#ff4040"/><rect x="549" y="260" width="5" height="5" fill="#ff4040"/><rect x="561" y="260" width="5" height="5" fill="#4040ff"/><rect x="572" y="260" width="5" height="5" fill="#4040ff"/><rect x="583" y="260" width="5" height="5" fill="#4040ff"/><rect x="595" y="260" width="5" height="5" fill="#4040ff"/><rect x="606" y="260" width="5" height="5" fill="#4040ff"/><rect x="743" y="201" width="17" height="6" fill="#ff4040"/><rect x="760" y="201" width="28" height="6" fill="#4040ff"/><rect x="800" y="201" width="5" height="6" fill="#4040ff"/>
</svg>
<svg class="ov" width="1352" height="755" viewBox="0 0 1352 755"><g fill="#000000" stroke="#000000" stroke-width="0.3"><text transform="translate(135 275) scale(1 1.1)" font-size="13" text-anchor="start">C1</text><text transform="translate(135 311) scale(1 1.1)" font-size="9" text-anchor="start">30pF</text><text transform="translate(135 344) scale(1 1.1)" font-size="13" text-anchor="start">C2</text><text transform="translate(135 380) scale(1 1.1)" font-size="9" text-anchor="start">30pF</text><text transform="translate(239 325) scale(1 1.1)" font-size="13" text-anchor="start">X1</text><text transform="translate(239 337) scale(1 1.1)" font-size="9" text-anchor="start">CRYSTAL</text><text transform="translate(213.5 302) rotate(-90) scale(1 1.1)" font-size="9" text-anchor="start">2</text><text transform="translate(213.5 352) rotate(-90) scale(1 1.1)" font-size="9" text-anchor="start">1</text><text transform="translate(164 384) scale(1 1.1)" font-size="13" text-anchor="start">R1</text><text transform="translate(164 406) scale(1 1.1)" font-size="9" text-anchor="start">1k</text><text transform="translate(170 406) scale(1 1.1)" font-size="13" text-anchor="start">C3</text><text transform="translate(170 442) scale(1 1.1)" font-size="9" text-anchor="start">22uF</text><text transform="translate(204 453) scale(1 1.1)" font-size="13" text-anchor="start">R2</text><text transform="translate(204 475) scale(1 1.1)" font-size="9" text-anchor="start">200</text><text transform="translate(124.6 443) scale(1 1.1)" font-size="13" text-anchor="start">BTN1</text><text transform="translate(123.5 474) scale(1 1.1)" font-size="9" text-anchor="start">BUTTON</text><text transform="translate(774.5 363) scale(1 1.1)" font-size="13" text-anchor="start">S1</text><text transform="translate(877.1 363) scale(1 1.1)" font-size="13" text-anchor="start">S2</text><text transform="translate(979.6 363) scale(1 1.1)" font-size="13" text-anchor="start">S3</text><text transform="translate(1076.5 363) scale(1 1.1)" font-size="13" text-anchor="start">S4</text><text transform="translate(774.5 409) scale(1 1.1)" font-size="13" text-anchor="start">S5</text><text transform="translate(877.1 409) scale(1 1.1)" font-size="13" text-anchor="start">S6</text><text transform="translate(979.6 409) scale(1 1.1)" font-size="13" text-anchor="start">S7</text><text transform="translate(1076.5 409) scale(1 1.1)" font-size="13" text-anchor="start">S8</text><text transform="translate(774.5 454) scale(1 1.1)" font-size="13" text-anchor="start">S9</text><text transform="translate(877.1 454) scale(1 1.1)" font-size="13" text-anchor="start">S10</text><text transform="translate(979.6 454) scale(1 1.1)" font-size="13" text-anchor="start">S11</text><text transform="translate(1076.5 454) scale(1 1.1)" font-size="13" text-anchor="start">S12</text><text transform="translate(774.5 499) scale(1 1.1)" font-size="13" text-anchor="start">S13</text><text transform="translate(877.1 499) scale(1 1.1)" font-size="13" text-anchor="start">S14</text><text transform="translate(979.6 499) scale(1 1.1)" font-size="13" text-anchor="start">S15</text><text transform="translate(1076.5 499) scale(1 1.1)" font-size="13" text-anchor="start">S16</text><text transform="translate(329 326) scale(1 1.1)" font-size="13" text-anchor="start">U1</text><text transform="translate(329 647) scale(1 1.1)" font-size="9" text-anchor="start">AT89C51</text><text transform="translate(318 339) scale(1 1.1)" font-size="9" text-anchor="end">19</text><text transform="translate(336 345) scale(1 1.1)" font-size="9" text-anchor="start">XTAL1</text><text transform="translate(318 373) scale(1 1.1)" font-size="9" text-anchor="end">18</text><text transform="translate(336 379) scale(1 1.1)" font-size="9" text-anchor="start">XTAL2</text><text transform="translate(318 418) scale(1 1.1)" font-size="9" text-anchor="end">9</text><text transform="translate(336 424) scale(1 1.1)" font-size="9" text-anchor="start">RST</text><text transform="translate(318 475) scale(1 1.1)" font-size="9" text-anchor="end">29</text><text transform="translate(336 481) scale(1 1.1)" font-size="9" text-anchor="start">PSEN</text><text transform="translate(318 487) scale(1 1.1)" font-size="9" text-anchor="end">30</text><text transform="translate(336 493) scale(1 1.1)" font-size="9" text-anchor="start">ALE</text><text transform="translate(318 498) scale(1 1.1)" font-size="9" text-anchor="end">31</text><text transform="translate(336 504) scale(1 1.1)" font-size="9" text-anchor="start">EA</text><text transform="translate(318 544) scale(1 1.1)" font-size="9" text-anchor="end">1</text><text transform="translate(336 550) scale(1 1.1)" font-size="9" text-anchor="start">P1.0</text><text transform="translate(318 555) scale(1 1.1)" font-size="9" text-anchor="end">2</text><text transform="translate(336 561) scale(1 1.1)" font-size="9" text-anchor="start">P1.1</text><text transform="translate(318 567) scale(1 1.1)" font-size="9" text-anchor="end">3</text><text transform="translate(336 573) scale(1 1.1)" font-size="9" text-anchor="start">P1.2</text><text transform="translate(318 578) scale(1 1.1)" font-size="9" text-anchor="end">4</text><text transform="translate(336 584) scale(1 1.1)" font-size="9" text-anchor="start">P1.3</text><text transform="translate(318 589) scale(1 1.1)" font-size="9" text-anchor="end">5</text><text transform="translate(336 595) scale(1 1.1)" font-size="9" text-anchor="start">P1.4</text><text transform="translate(318 601) scale(1 1.1)" font-size="9" text-anchor="end">6</text><text transform="translate(336 607) scale(1 1.1)" font-size="9" text-anchor="start">P1.5</text><text transform="translate(318 612) scale(1 1.1)" font-size="9" text-anchor="end">7</text><text transform="translate(336 618) scale(1 1.1)" font-size="9" text-anchor="start">P1.6</text><text transform="translate(318 624) scale(1 1.1)" font-size="9" text-anchor="end">8</text><text transform="translate(336 630) scale(1 1.1)" font-size="9" text-anchor="start">P1.7</text><text transform="translate(501 339) scale(1 1.1)" font-size="9" text-anchor="start">39</text><text transform="translate(483 345) scale(1 1.1)" font-size="9" text-anchor="end">P0.0/AD0</text><text transform="translate(501 350) scale(1 1.1)" font-size="9" text-anchor="start">38</text><text transform="translate(483 356) scale(1 1.1)" font-size="9" text-anchor="end">P0.1/AD1</text><text transform="translate(501 361) scale(1 1.1)" font-size="9" text-anchor="start">37</text><text transform="translate(483 367) scale(1 1.1)" font-size="9" text-anchor="end">P0.2/AD2</text><text transform="translate(501 373) scale(1 1.1)" font-size="9" text-anchor="start">36</text><text transform="translate(483 379) scale(1 1.1)" font-size="9" text-anchor="end">P0.3/AD3</text><text transform="translate(501 384) scale(1 1.1)" font-size="9" text-anchor="start">35</text><text transform="translate(483 390) scale(1 1.1)" font-size="9" text-anchor="end">P0.4/AD4</text><text transform="translate(501 396) scale(1 1.1)" font-size="9" text-anchor="start">34</text><text transform="translate(483 402) scale(1 1.1)" font-size="9" text-anchor="end">P0.5/AD5</text><text transform="translate(501 407) scale(1 1.1)" font-size="9" text-anchor="start">33</text><text transform="translate(483 413) scale(1 1.1)" font-size="9" text-anchor="end">P0.6/AD6</text><text transform="translate(501 418) scale(1 1.1)" font-size="9" text-anchor="start">32</text><text transform="translate(483 424) scale(1 1.1)" font-size="9" text-anchor="end">P0.7/AD7</text><text transform="translate(501 441) scale(1 1.1)" font-size="9" text-anchor="start">21</text><text transform="translate(483 447) scale(1 1.1)" font-size="9" text-anchor="end">P2.0/A8</text><text transform="translate(501 453) scale(1 1.1)" font-size="9" text-anchor="start">22</text><text transform="translate(483 459) scale(1 1.1)" font-size="9" text-anchor="end">P2.1/A9</text><text transform="translate(501 464) scale(1 1.1)" font-size="9" text-anchor="start">23</text><text transform="translate(483 470) scale(1 1.1)" font-size="9" text-anchor="end">P2.2/A10</text><text transform="translate(501 475) scale(1 1.1)" font-size="9" text-anchor="start">24</text><text transform="translate(483 481) scale(1 1.1)" font-size="9" text-anchor="end">P2.3/A11</text><text transform="translate(501 487) scale(1 1.1)" font-size="9" text-anchor="start">25</text><text transform="translate(483 493) scale(1 1.1)" font-size="9" text-anchor="end">P2.4/A12</text><text transform="translate(501 498) scale(1 1.1)" font-size="9" text-anchor="start">26</text><text transform="translate(483 504) scale(1 1.1)" font-size="9" text-anchor="end">P2.5/A13</text><text transform="translate(501 510) scale(1 1.1)" font-size="9" text-anchor="start">27</text><text transform="translate(483 516) scale(1 1.1)" font-size="9" text-anchor="end">P2.6/A14</text><text transform="translate(501 521) scale(1 1.1)" font-size="9" text-anchor="start">28</text><text transform="translate(483 527) scale(1 1.1)" font-size="9" text-anchor="end">P2.7/A15</text><text transform="translate(501 544) scale(1 1.1)" font-size="9" text-anchor="start">10</text><text transform="translate(483 550) scale(1 1.1)" font-size="9" text-anchor="end">P3.0/RXD</text><text transform="translate(501 555) scale(1 1.1)" font-size="9" text-anchor="start">11</text><text transform="translate(483 561) scale(1 1.1)" font-size="9" text-anchor="end">P3.1/TXD</text><text transform="translate(501 567) scale(1 1.1)" font-size="9" text-anchor="start">12</text><text transform="translate(483 573) scale(1 1.1)" font-size="9" text-anchor="end">P3.2/INT0</text><text transform="translate(501 578) scale(1 1.1)" font-size="9" text-anchor="start">13</text><text transform="translate(483 584) scale(1 1.1)" font-size="9" text-anchor="end">P3.3/INT1</text><text transform="translate(501 589) scale(1 1.1)" font-size="9" text-anchor="start">14</text><text transform="translate(483 595) scale(1 1.1)" font-size="9" text-anchor="end">P3.4/T0</text><text transform="translate(501 601) scale(1 1.1)" font-size="9" text-anchor="start">15</text><text transform="translate(483 607) scale(1 1.1)" font-size="9" text-anchor="end">P3.5/T1</text><text transform="translate(501 612) scale(1 1.1)" font-size="9" text-anchor="start">16</text><text transform="translate(483 618) scale(1 1.1)" font-size="9" text-anchor="end">P3.6/WR</text><text transform="translate(501 624) scale(1 1.1)" font-size="9" text-anchor="start">17</text><text transform="translate(483 630) scale(1 1.1)" font-size="9" text-anchor="end">P3.7/RD</text><text transform="translate(272 543) scale(1 1.1)" font-size="9" text-anchor="start">wd1</text><text transform="translate(272 554) scale(1 1.1)" font-size="9" text-anchor="start">wd2</text><text transform="translate(272 566) scale(1 1.1)" font-size="9" text-anchor="start">wd3</text><text transform="translate(272 577) scale(1 1.1)" font-size="9" text-anchor="start">wd4</text><text transform="translate(272 588) scale(1 1.1)" font-size="9" text-anchor="start">wd5</text><text transform="translate(272 600) scale(1 1.1)" font-size="9" text-anchor="start">wd6</text><text transform="translate(500 200) scale(1 1.1)" font-size="13" text-anchor="start">RP1</text><text transform="translate(500 212) scale(1 1.1)" font-size="9" text-anchor="start">RESPACK-8</text><text transform="translate(510 271.5) rotate(-90) scale(1 1.1)" font-size="9" text-anchor="start">1</text><text transform="translate(532 271.5) rotate(-90) scale(1 1.1)" font-size="9" text-anchor="start">2</text><text transform="translate(544 271.5) rotate(-90) scale(1 1.1)" font-size="9" text-anchor="start">3</text><text transform="translate(555 271.5) rotate(-90) scale(1 1.1)" font-size="9" text-anchor="start">4</text><text transform="translate(567 271.5) rotate(-90) scale(1 1.1)" font-size="9" text-anchor="start">5</text><text transform="translate(578 271.5) rotate(-90) scale(1 1.1)" font-size="9" text-anchor="start">6</text><text transform="translate(589 271.5) rotate(-90) scale(1 1.1)" font-size="9" text-anchor="start">7</text><text transform="translate(601 271.5) rotate(-90) scale(1 1.1)" font-size="9" text-anchor="start">8</text><text transform="translate(612 271.5) rotate(-90) scale(1 1.1)" font-size="9" text-anchor="start">9</text><text transform="translate(518 339) scale(1 1.1)" font-size="9" text-anchor="start">a</text><text transform="translate(518 350) scale(1 1.1)" font-size="9" text-anchor="start">b</text><text transform="translate(518 361) scale(1 1.1)" font-size="9" text-anchor="start">c</text><text transform="translate(518 373) scale(1 1.1)" font-size="9" text-anchor="start">d</text><text transform="translate(518 384) scale(1 1.1)" font-size="9" text-anchor="start">e</text><text transform="translate(518 396) scale(1 1.1)" font-size="9" text-anchor="start">f</text><text transform="translate(518 407) scale(1 1.1)" font-size="9" text-anchor="start">g</text><text transform="translate(518 418) scale(1 1.1)" font-size="9" text-anchor="start">dp</text><text transform="translate(795 232.5) rotate(-90) scale(1 1.1)" font-size="9" text-anchor="start">wd8</text><text transform="translate(737.5 232.5) rotate(-90) scale(1 1.1)" font-size="9" text-anchor="start">a</text><text transform="translate(742.5 232.5) rotate(-90) scale(1 1.1)" font-size="9" text-anchor="start">b</text><text transform="translate(748.5 232.5) rotate(-90) scale(1 1.1)" font-size="9" text-anchor="start">c</text><text transform="translate(754.5 232.5) rotate(-90) scale(1 1.1)" font-size="9" text-anchor="start">d</text><text transform="translate(759.5 232.5) rotate(-90) scale(1 1.1)" font-size="9" text-anchor="start">e</text><text transform="translate(765.5 232.5) rotate(-90) scale(1 1.1)" font-size="9" text-anchor="start">f</text><text transform="translate(771.5 232.5) rotate(-90) scale(1 1.1)" font-size="9" text-anchor="start">g</text><text transform="translate(777.5 232.5) rotate(-90) scale(1 1.1)" font-size="9" text-anchor="start">dp</text></g></svg>
</body></html>
